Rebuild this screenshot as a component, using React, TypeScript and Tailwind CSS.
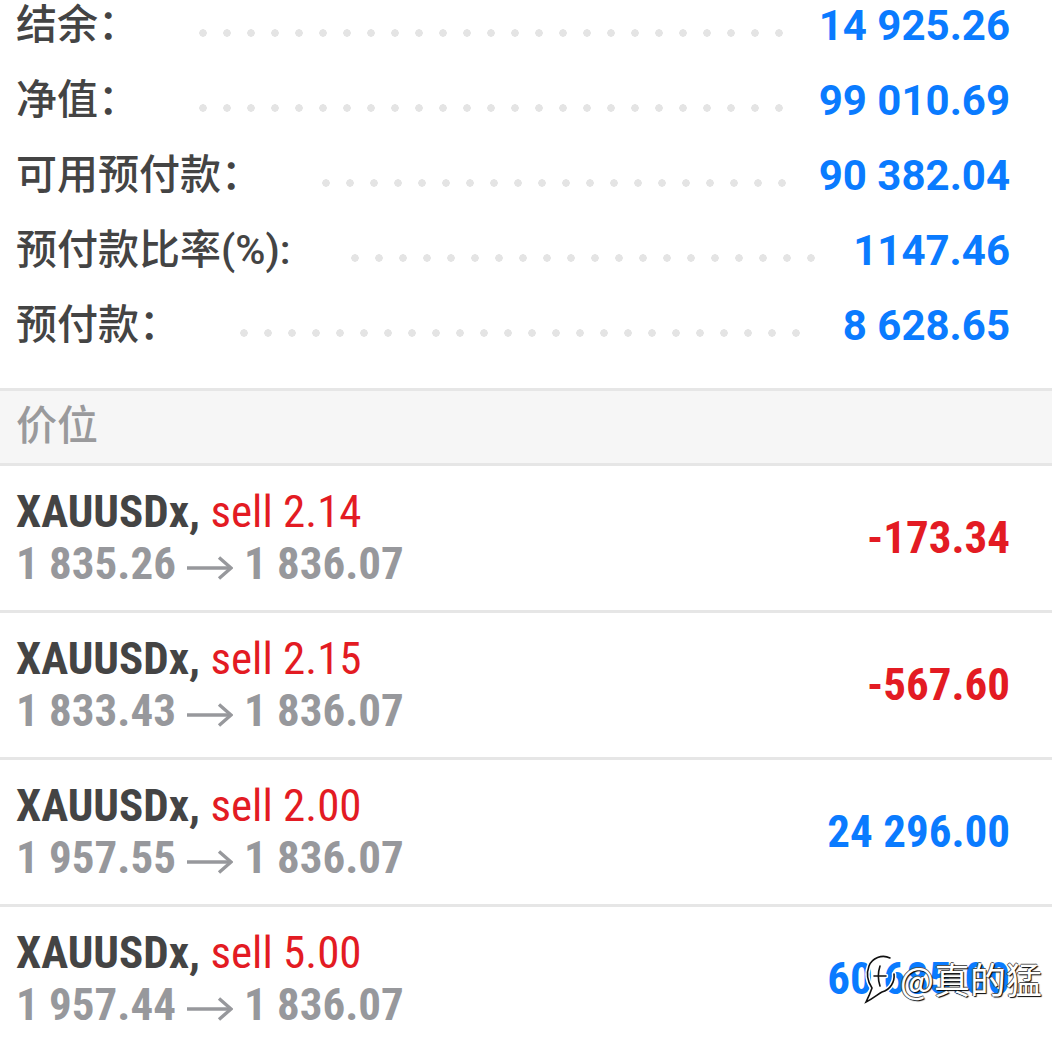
const summary = [
  { label: '结余：', value: '14 925.26' },
  { label: '净值：', value: '99 010.69' },
  { label: '可用预付款：', value: '90 382.04' },
  { label: '预付款比率(%):', value: '1147.46' },
  { label: '预付款：', value: '8 628.65' },
]

const positions = [
  { lots: '2.14', open: '1 835.26', price: '1 836.07', profit: '-173.34' },
  { lots: '2.15', open: '1 833.43', price: '1 836.07', profit: '-567.60' },
  { lots: '2.00', open: '1 957.55', price: '1 836.07', profit: '24 296.00' },
  { lots: '5.00', open: '1 957.44', price: '1 836.07', profit: '60 685.00' },
]

function Arrow() {
  return (
    <svg width="47" height="24" viewBox="0 0 47 24" className="inline-block ml-[10px] mr-[11px] align-[-1px]">
      <path d="M1 12 H44" stroke="#97989c" strokeWidth="3.4" fill="none" />
      <path d="M33 1.5 L45 12 L33 22.5" stroke="#97989c" strokeWidth="3.4" fill="none" />
    </svg>
  )
}

function Watermark() {
  const d =
    'M30 6 C22 2 12 6 9 14 C6 22 8 30 12 36 C10 42 8 46 6 50 C14 46 18 42 22 40 C30 38 35 30 34 22 M14 24 H26 M20 14 C18 20 18 28 20 34'
  return (
    <div className="absolute left-[860px] top-[952px] flex items-center pointer-events-none">
      <svg width="38" height="52" viewBox="0 0 38 52">
        <path d={d} stroke="#fff" strokeWidth="4.5" fill="none" strokeLinecap="round" />
        <path d={d} stroke="#111" strokeWidth="1.6" fill="none" strokeLinecap="round" />
      </svg>
      <span className="ml-[2px] text-[36px] leading-none text-white font-['Noto_Sans_CJK_SC',sans-serif] [text-shadow:1px_1px_1px_#000,-1px_0_0_#555,0_-1px_0_#555]">
        @真的猛
      </span>
    </div>
  )
}

export default function App() {
  return (
    <div className="relative w-[1052px] h-[1038px] overflow-hidden bg-white font-['Roboto','Noto_Sans_CJK_SC',sans-serif]">
      <div className="mt-[-12px] pb-[25px]">
        {summary.map(r => (
          <div key={r.label} className="flex items-center h-[75px] pl-[16px] pr-[42px]">
            <span className="text-[41px] font-medium text-[#444]">{r.label}</span>
            <div className="flex-1 h-[8px] mt-[14px] ml-[52px] mr-[30px] bg-[radial-gradient(circle,#e4e4e4_3.5px,transparent_4px)] bg-[length:24px_8px] bg-repeat-x" />
            <span className="text-[42px] font-bold text-[#0a7bff] leading-none">{r.value}</span>
          </div>
        ))}
      </div>

      <div className="border-y-[3px] border-[#e6e6e6] bg-[#f6f6f6] h-[78px] flex items-center pl-[16px]">
        <span className="text-[41px] text-[#9a9a9c] font-medium">价位</span>
      </div>

      <div className="font-['Roboto_Condensed','Liberation_Sans_Narrow','Roboto',sans-serif]">
        {positions.map((p, i) => (
          <div key={i} className="flex items-center h-[147px] border-b-[3px] border-[#e6e6e6] pl-[16px] pr-[42px]">
            <div className="flex-1 text-[45px] leading-[52px]">
              <div>
                <span className="font-bold text-[#444]">XAUUSDx,</span>
                <span className="text-[#e31b23]"> sell {p.lots}</span>
              </div>
              <div className="font-bold text-[#97989c] whitespace-nowrap">
                {p.open}
                <Arrow />
                {p.price}
              </div>
            </div>
            <span
              className={`text-[45px] font-bold ${p.profit.startsWith('-') ? 'text-[#e31b23]' : 'text-[#0a7bff]'}`}
            >
              {p.profit}
            </span>
          </div>
        ))}
      </div>

      <Watermark />
    </div>
  )
}
